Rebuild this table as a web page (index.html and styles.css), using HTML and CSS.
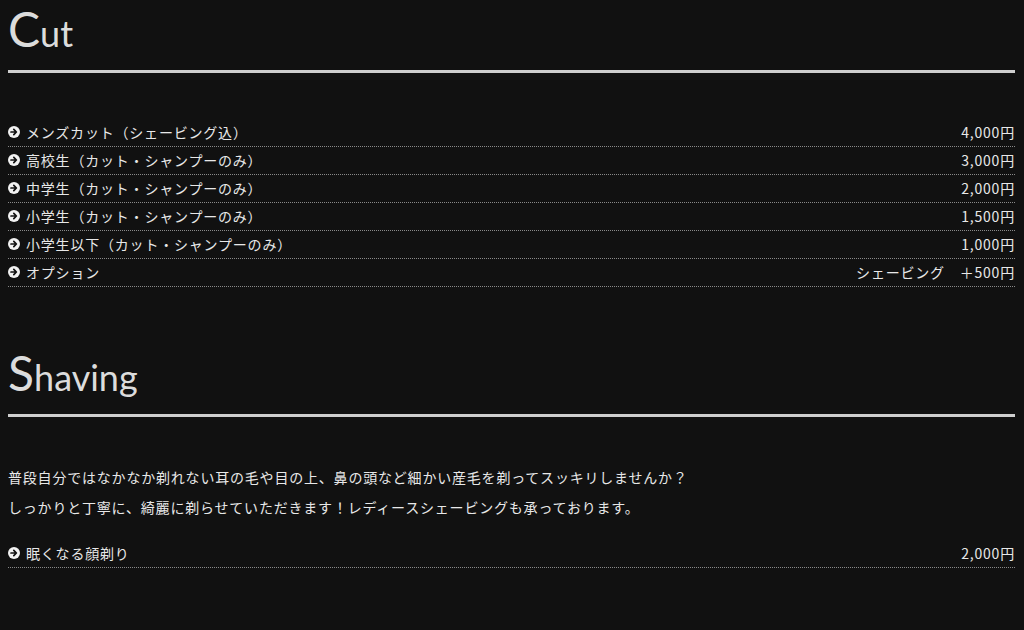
FILE: index.html
```html
<!DOCTYPE html>
<html lang="ja">
<head>
<meta charset="utf-8">
<title>Menu</title>
<link rel="stylesheet" href="styles.css">
</head>
<body>
<div class="page">
  <section class="menu-section">
    <h2 class="section-title">Cut</h2>
    <ul class="price-list">
      <li class="price-row">
        <span class="item"><svg class="icon" viewBox="0 0 12 12"><circle cx="6" cy="6" r="6"/><path d="M3 6h5M5.8 3.4L8.4 6 5.8 8.6"/></svg>メンズカット（シェービング込）</span>
        <span class="price">4,000円</span>
      </li>
      <li class="price-row">
        <span class="item"><svg class="icon" viewBox="0 0 12 12"><circle cx="6" cy="6" r="6"/><path d="M3 6h5M5.8 3.4L8.4 6 5.8 8.6"/></svg>高校生（カット・シャンプーのみ）</span>
        <span class="price">3,000円</span>
      </li>
      <li class="price-row">
        <span class="item"><svg class="icon" viewBox="0 0 12 12"><circle cx="6" cy="6" r="6"/><path d="M3 6h5M5.8 3.4L8.4 6 5.8 8.6"/></svg>中学生（カット・シャンプーのみ）</span>
        <span class="price">2,000円</span>
      </li>
      <li class="price-row">
        <span class="item"><svg class="icon" viewBox="0 0 12 12"><circle cx="6" cy="6" r="6"/><path d="M3 6h5M5.8 3.4L8.4 6 5.8 8.6"/></svg>小学生（カット・シャンプーのみ）</span>
        <span class="price">1,500円</span>
      </li>
      <li class="price-row">
        <span class="item"><svg class="icon" viewBox="0 0 12 12"><circle cx="6" cy="6" r="6"/><path d="M3 6h5M5.8 3.4L8.4 6 5.8 8.6"/></svg>小学生以下（カット・シャンプーのみ）</span>
        <span class="price">1,000円</span>
      </li>
      <li class="price-row">
        <span class="item"><svg class="icon" viewBox="0 0 12 12"><circle cx="6" cy="6" r="6"/><path d="M3 6h5M5.8 3.4L8.4 6 5.8 8.6"/></svg>オプション</span>
        <span class="price">シェービング　＋500円</span>
      </li>
    </ul>
  </section>

  <section class="menu-section shaving">
    <h2 class="section-title">Shaving</h2>
    <p class="lead">普段自分ではなかなか剃れない耳の毛や目の上、鼻の頭など細かい産毛を剃ってスッキリしませんか？<br>しっかりと丁寧に、綺麗に剃らせていただきます！レディースシェービングも承っております。</p>
    <ul class="price-list">
      <li class="price-row">
        <span class="item"><svg class="icon" viewBox="0 0 12 12"><circle cx="6" cy="6" r="6"/><path d="M3 6h5M5.8 3.4L8.4 6 5.8 8.6"/></svg>眠くなる顔剃り</span>
        <span class="price">2,000円</span>
      </li>
    </ul>
  </section>
</div>
</body>
</html>
```

FILE: styles.css
```css
html, body {
  margin: 0;
  padding: 0;
  background: #111111;
}

body {
  color: #e8e8e8;
  font-family: "Noto Sans CJK JP", "Noto Sans", sans-serif;
  font-size: 14px;
  letter-spacing: 0.8px;
}

.page {
  padding: 0 9px 0 8px;
}

.menu-section {
  margin: 0;
}

.shaving {
  margin-top: 57px;
}

.section-title {
  margin: 0;
  font-family: "Lato", "Open Sans", sans-serif;
  font-weight: 400;
  font-size: 36px;
  line-height: 58px;
  letter-spacing: 0;
  color: #dcdcdc;
  padding-bottom: 8px;
  border-bottom: 3px solid #cfcfcf;
}

.section-title::first-letter {
  font-size: 48px;
}

.price-list {
  list-style: none;
  margin: 46px 0 0;
  padding: 0;
}

.price-row {
  display: flex;
  justify-content: space-between;
  align-items: center;
  height: 26.8px;
  padding-bottom: 0.2px;
  border-bottom: 1px dotted #8a8a8a;
}

.item {
  display: flex;
  align-items: center;
  gap: 6px;
}

.icon {
  width: 12px;
  height: 12px;
  flex: none;
}

.icon circle {
  fill: #f2f2f2;
}

.icon path {
  fill: none;
  stroke: #111111;
  stroke-width: 1.7;
  stroke-linecap: round;
  stroke-linejoin: round;
}

.price {
  letter-spacing: 0.8px;
}

.lead {
  margin: 45px 0 18px;
  line-height: 30px;
}

.lead + .price-list {
  margin-top: 0;
}
```
